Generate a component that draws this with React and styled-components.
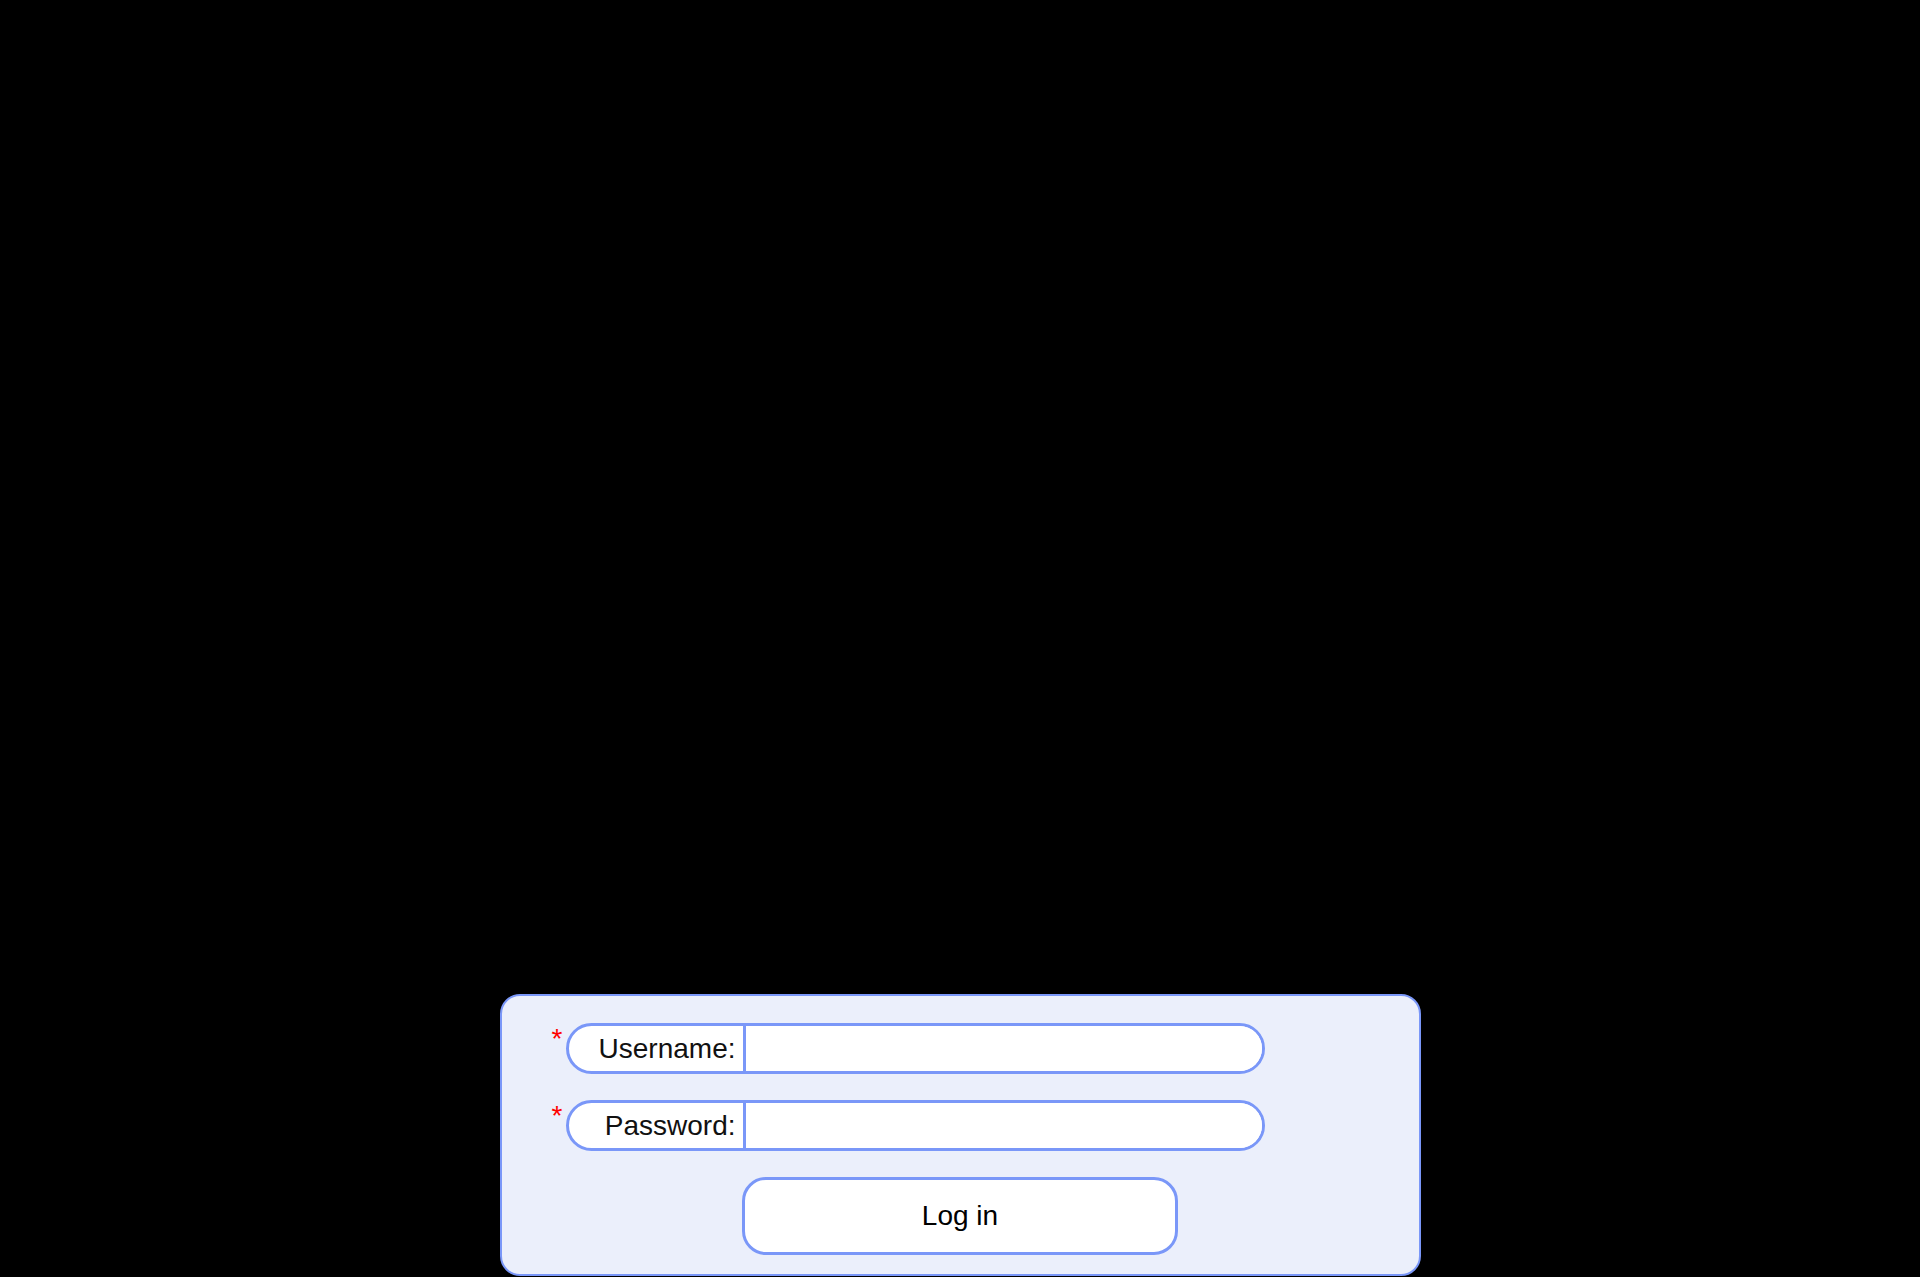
import React from "react";
import styled, { createGlobalStyle } from "styled-components";

const GlobalStyle = createGlobalStyle`
  html, body {
    margin: 0;
    padding: 0;
    background: #000;
  }
  body {
    font-family: "Liberation Sans", Arial, sans-serif;
  }
`;

// Colors: border #7a97f8, panel #ebeffb

const Page = styled.div`
  min-height: 1277px;
  display: flex;
  justify-content: center;
  align-items: flex-end;
  background: #000;
`;

const Panel = styled.form`
  box-sizing: border-box;
  width: 921px;
  margin-bottom: 1px;
  padding: 27px 0 19px 50px;
  background: #ebeffb;
  border: 2px solid #7a97f8;
  border-radius: 20px;
  display: flex;
  flex-direction: column;
`;

const Row = styled.div`
  display: flex;
  align-items: flex-start;
  margin-bottom: 26px;
`;

const Asterisk = styled.span`
  width: 14px;
  margin-top: 2px;
  font-size: 28px;
  line-height: 1;
  color: #ff0000;
`;

const Field = styled.div`
  box-sizing: border-box;
  display: flex;
  width: 699px;
  height: 51px;
  border: 3px solid #7a97f8;
  border-radius: 26px;
  background: #fff;
  overflow: hidden;
`;

const Label = styled.label`
  width: 177px;
  box-sizing: border-box;
  padding-right: 7px;
  border-right: 3px solid #7a97f8;
  text-align: right;
  font-size: 28px;
  line-height: 45px;
  color: #111;
  flex-shrink: 0;
`;

const Input = styled.input`
  flex: 1;
  min-width: 0;
  border: none;
  outline: none;
  background: #fff;
  font-family: inherit;
  font-size: 24px;
  padding: 0 12px;
`;

const ButtonRow = styled.div`
  display: flex;
  justify-content: center;
  margin-left: -50px;
`;

const Button = styled.button`
  box-sizing: border-box;
  width: 436px;
  height: 78px;
  border: 3px solid #7a97f8;
  border-radius: 24px;
  background: #fff;
  font-family: "Liberation Sans", Arial, sans-serif;
  font-size: 28px;
  color: #000;
  cursor: pointer;
`;

const fields = [
  { id: "username", label: "Username:", type: "text" },
  { id: "password", label: "Password:", type: "password" }
];

const App = () => {
  return (
    <>
      <GlobalStyle />
      <Page>
        <Panel onSubmit={e => e.preventDefault()}>
          {fields.map(f => (
            <Row key={f.id}>
              <Asterisk>*</Asterisk>
              <Field>
                <Label htmlFor={f.id}>{f.label}</Label>
                <Input id={f.id} type={f.type} />
              </Field>
            </Row>
          ))}
          <ButtonRow>
            <Button type="submit">Log in</Button>
          </ButtonRow>
        </Panel>
      </Page>
    </>
  );
};

export default App;
